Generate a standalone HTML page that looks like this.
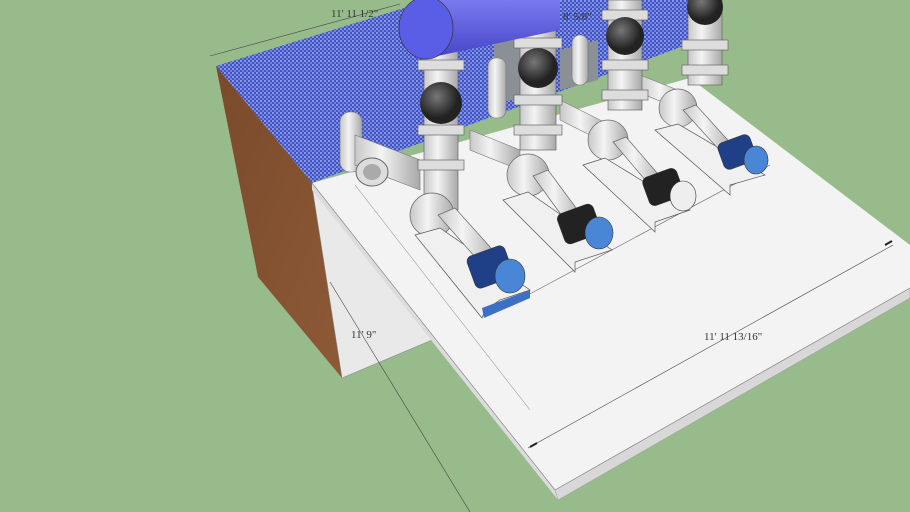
<!DOCTYPE html>
<html><head><meta charset="utf-8"><style>
html,body{margin:0;padding:0;background:#98bb8c;overflow:hidden}
svg{display:block}
text{font-family:"Liberation Serif",serif;font-size:11px;fill:#333}
</style></head><body>
<svg width="910" height="512" viewBox="0 0 910 512" xmlns="http://www.w3.org/2000/svg">
<defs>
<pattern id="hatch" width="4" height="4" patternUnits="userSpaceOnUse">
<rect width="4" height="4" fill="#3f52c8"/><rect width="2" height="2" fill="#8a98e4"/><rect x="2" y="2" width="2" height="2" fill="#7384dc"/>
</pattern>
<linearGradient id="brick" x1="0" y1="0" x2="1" y2="1"><stop offset="0" stop-color="#7a4a2c"/><stop offset="1" stop-color="#8d5a36"/></linearGradient>
<linearGradient id="pipe" x1="0" x2="1"><stop offset="0" stop-color="#c8c8c8"/><stop offset=".4" stop-color="#f4f4f4"/><stop offset="1" stop-color="#a8a8a8"/></linearGradient>
<linearGradient id="tank" x1="0" y1="0" x2="0" y2="1"><stop offset="0" stop-color="#7a7af0"/><stop offset="1" stop-color="#4545c8"/></linearGradient>
<radialGradient id="ball" cx=".4" cy=".35"><stop offset="0" stop-color="#777"/><stop offset="1" stop-color="#222"/></radialGradient>
</defs>
<polygon points="216,66 430,0 700,0 700,40 312,183" fill="url(#hatch)"/>
<polygon points="216,66 312,183 342,378 258,277" fill="url(#brick)"/>
<polygon points="312,186 342,378 432,340" fill="#e9e9e9" stroke="#888" stroke-width=".6"/>
<polygon points="312,183 690,78 910,245 910,288 555,490" fill="#f3f3f3"/>
<polygon points="312,183 555,490 558,500 312,190" fill="#dcdcdc"/>
<polygon points="555,490 910,288 910,298 558,500" fill="#d8d8d8" stroke="#999" stroke-width=".5"/>
<line x1="312" y1="183" x2="555" y2="490" stroke="#888" stroke-width=".7"/>
<line x1="555" y1="490" x2="910" y2="288" stroke="#888" stroke-width=".7"/>
<line x1="355" y1="185" x2="530" y2="410" stroke="#777" stroke-width=".5"/>
<line x1="500" y1="310" x2="770" y2="165" stroke="#666" stroke-width=".6"/>
<line x1="210" y1="56" x2="400" y2="4" stroke="#444" stroke-width=".6"/>
<line x1="330" y1="282" x2="470" y2="512" stroke="#444" stroke-width=".6"/>
<line x1="528" y1="448" x2="893" y2="245" stroke="#444" stroke-width=".6"/>
<line x1="885" y1="245" x2="892" y2="241" stroke="#222" stroke-width="2"/>
<line x1="530" y1="447" x2="537" y2="443" stroke="#222" stroke-width="2"/>
<text x="331" y="17">11' 11 1/2"</text>
<text x="563" y="20">8' 5/8"</text>
<text x="351" y="338">11' 9"</text>
<text x="704" y="340">11' 11 13/16"</text>
<polygon points="494,28 522,20 522,98 494,104" fill="#8a9096"/>
<polygon points="560,50 598,40 598,80 560,90" fill="#8a9096"/>
<rect x="340" y="112" width="22" height="60" rx="10" fill="url(#pipe)" stroke="#777" stroke-width=".6"/>
<rect x="488" y="58" width="18" height="60" rx="8" fill="url(#pipe)" stroke="#777" stroke-width=".6"/>
<rect x="572" y="35" width="16" height="50" rx="8" fill="url(#pipe)" stroke="#777" stroke-width=".6"/>
<polygon points="355,135 420,160 420,190 355,165" fill="url(#pipe)" stroke="#777" stroke-width=".6"/>
<ellipse cx="372" cy="172" rx="16" ry="14" fill="#ddd" stroke="#666"/>
<ellipse cx="372" cy="172" rx="9" ry="8" fill="#aaa"/>
<polygon points="470,130 520,150 520,170 470,150" fill="url(#pipe)" stroke="#777" stroke-width=".6"/>
<polygon points="560,100 610,125 610,145 560,120" fill="url(#pipe)" stroke="#777" stroke-width=".6"/>
<polygon points="640,75 690,95 690,113 640,93" fill="url(#pipe)" stroke="#777" stroke-width=".6"/>
<g stroke="#666" stroke-width=".7">
<rect x="424" y="50" width="34" height="160" fill="url(#pipe)"/>
<rect x="520" y="0" width="36" height="150" fill="url(#pipe)"/>
<rect x="608" y="0" width="34" height="110" fill="url(#pipe)"/>
<rect x="688" y="0" width="34" height="85" fill="url(#pipe)"/>
<rect x="418" y="60" width="46" height="10" fill="#ddd"/><rect x="418" y="125" width="46" height="10" fill="#ddd"/><rect x="418" y="160" width="46" height="10" fill="#ddd"/>
<rect x="514" y="38" width="48" height="10" fill="#ddd"/><rect x="514" y="95" width="48" height="10" fill="#ddd"/><rect x="514" y="125" width="48" height="10" fill="#ddd"/>
<rect x="602" y="10" width="46" height="10" fill="#ddd"/><rect x="602" y="60" width="46" height="10" fill="#ddd"/><rect x="602" y="90" width="46" height="10" fill="#ddd"/>
<rect x="682" y="40" width="46" height="10" fill="#ddd"/><rect x="682" y="65" width="46" height="10" fill="#ddd"/>
</g>
<circle cx="441" cy="103" r="21" fill="url(#ball)"/>
<circle cx="538" cy="68" r="20" fill="url(#ball)"/>
<circle cx="625" cy="36" r="19" fill="url(#ball)"/>
<circle cx="705" cy="7" r="18" fill="url(#ball)"/>
<g fill="url(#pipe)" stroke="#666" stroke-width=".7">
<circle cx="432" cy="215" r="22"/><circle cx="528" cy="175" r="21"/><circle cx="608" cy="140" r="20"/><circle cx="678" cy="108" r="19"/>
</g>
<g fill="#f0f0f0" stroke="#555" stroke-width=".7">
<polygon points="415,235 440,228 530,290 500,300 485,310 482,318"/>
<polygon points="503,200 528,192 612,250 575,262 575,272"/>
<polygon points="583,165 605,158 690,210 655,222 655,232"/>
<polygon points="655,130 678,124 765,175 730,185 730,195"/>
</g>
<polygon points="482,308 530,290 530,298 484,318" fill="#3d6fc6"/>
<g stroke="#666" stroke-width=".7" fill="url(#pipe)">
<polygon points="438,215 455,208 500,258 483,266"/>
<polygon points="533,176 548,170 585,220 570,227"/>
<polygon points="613,142 626,137 665,182 652,188"/>
<polygon points="683,110 696,105 735,148 722,153"/>
</g>
<g stroke="#333" stroke-width=".6">
<rect x="470" y="250" width="40" height="34" rx="6" fill="#1f3f86" transform="rotate(-20 490 267)"/>
<ellipse cx="510" cy="276" rx="15" ry="17" fill="#4a86d6"/>
<rect x="560" y="208" width="38" height="32" rx="6" fill="#222" transform="rotate(-20 579 224)"/>
<ellipse cx="599" cy="233" rx="14" ry="16" fill="#4a86d6"/>
<rect x="645" y="172" width="36" height="30" rx="6" fill="#222" transform="rotate(-20 663 187)"/>
<ellipse cx="683" cy="196" rx="13" ry="15" fill="#eee"/>
<rect x="720" y="138" width="34" height="28" rx="6" fill="#1f3f86" transform="rotate(-20 737 152)"/>
<ellipse cx="756" cy="160" rx="12" ry="14" fill="#4a86d6"/>
</g>
<polygon points="428,0 560,0 560,30 428,58" fill="url(#tank)"/>
<ellipse cx="426" cy="28" rx="27" ry="31" fill="#5a5ee6" stroke="#333" stroke-width=".7"/>
</svg>
</body></html>
